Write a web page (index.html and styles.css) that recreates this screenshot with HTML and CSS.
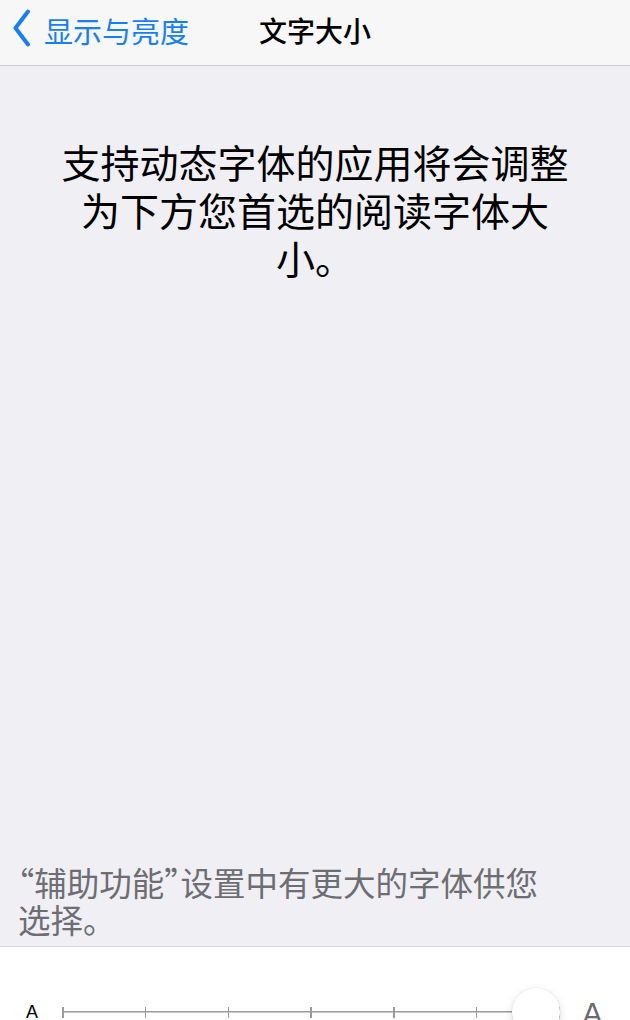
FILE: index.html
```html
<!DOCTYPE html>
<html lang="zh-CN">
<head>
<meta charset="utf-8">
<title>文字大小</title>
<link rel="stylesheet" href="styles.css">
</head>
<body>
<div class="screen">
  <header class="nav">
    <a class="nav-back" href="#">
      <svg class="chevron" width="20" height="38" viewBox="0 0 20 38" aria-hidden="true">
        <polyline points="16,2.5 3.5,19 16,35.5" fill="none" stroke="#157efb" stroke-width="4" stroke-linecap="round" stroke-linejoin="round"/>
      </svg>
      <span>显示与亮度</span>
    </a>
    <h1 class="nav-title">文字大小</h1>
    <div class="nav-spacer"></div>
  </header>

  <main class="content">
    <p class="intro">支持动态字体的应用将会调整为下方您首选的阅读字体大小。</p>
    <p class="footnote">“辅助功能”设置中有更大的字体供您选择。</p>
  </main>

  <section class="size-panel">
    <div class="slider-row">
      <span class="a-small">A</span>
      <div class="track">
        <span class="tick"></span>
        <span class="tick"></span>
        <span class="tick"></span>
        <span class="tick"></span>
        <span class="tick"></span>
        <span class="tick"></span>
        <span class="tick"></span>
        <span class="thumb"></span>
      </div>
      <span class="a-large">A</span>
    </div>
  </section>
</div>
</body>
</html>
```

FILE: styles.css
```css
html, body {
  margin: 0;
  padding: 0;
  height: 100%;
  overflow: hidden;
}

body {
  font-family: "Noto Sans CJK SC", "Noto Sans", sans-serif;
  background: #efeff4;
  color: #000;
}

/* the panel at the bottom runs past the bottom edge of the window */
.screen {
  display: flex;
  flex-direction: column;
  height: 1047px;
}

/* navigation bar */
.nav {
  flex: 0 0 auto;
  box-sizing: content-box;
  height: 59px;
  padding-bottom: 6px;
  background: #f7f7f8;
  border-bottom: 1px solid #cfced3;
  display: grid;
  grid-template-columns: 1fr auto 1fr;
  align-items: center;
}

.nav-back {
  display: flex;
  align-items: center;
  gap: 12px;
  padding-left: 12px;
  color: #157efb;
  text-decoration: none;
  font-size: 29px;
  line-height: 38px;
  justify-self: start;
}

.chevron {
  display: block;
  margin-top: -3px;
}

.nav-title {
  margin: 0;
  font-size: 28px;
  font-weight: 500;
  line-height: 38px;
}

/* body text */
.content {
  flex: 1 1 auto;
  display: flex;
  flex-direction: column;
  justify-content: space-between;
}

.intro {
  margin: 0;
  padding: 71px 45px 0;
  font-size: 39px;
  line-height: 48px;
  text-align: center;
}

.footnote {
  margin: 0;
  padding: 0 70px 9px 18px;
  font-size: 32.5px;
  line-height: 37px;
  color: #6d6d72;
  font-feature-settings: "halt";
}

/* font size slider */
.size-panel {
  flex: 0 0 100px;
  background: #fff;
  border-top: 1px solid #d6d5da;
}

.slider-row {
  display: flex;
  align-items: center;
  height: 48px;
  margin-top: 41px;
  padding-left: 26px;
}

.a-small {
  font-family: "Liberation Sans", sans-serif;
  font-size: 18px;
  width: 36px;
}

.track {
  position: relative;
  width: 498px;
  height: 11px;
  display: flex;
  justify-content: space-between;
  background: linear-gradient(#9a9a9f, #9a9a9f) center / 100% 1.5px no-repeat;
}

.tick {
  width: 1.5px;
  height: 11px;
  background: #9a9a9f;
}

.thumb {
  position: absolute;
  left: 450px;
  top: -18.5px;
  width: 48px;
  height: 48px;
  border-radius: 50%;
  background: #fff;
  box-shadow: 0 0 0 0.5px rgba(0, 0, 0, 0.06), 0 3px 8px rgba(0, 0, 0, 0.15), 0 2px 1px rgba(0, 0, 0, 0.05);
}

.a-large {
  font-family: "Liberation Sans", sans-serif;
  font-size: 31px;
  color: #6b6b6f;
  margin-left: 22px;
  margin-top: 6px;
}
```
